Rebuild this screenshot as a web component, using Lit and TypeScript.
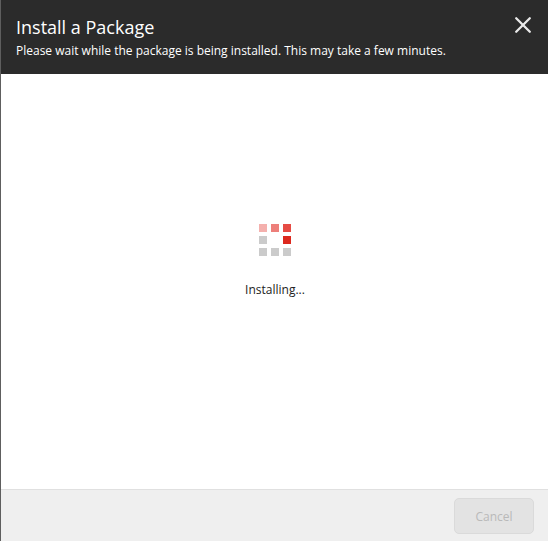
import { LitElement, html, css } from "lit";
import { customElement } from "lit/decorators.js";

@customElement("busy-squares")
class BusySquares extends LitElement {
  static styles = css`
    :host {
      display: grid;
      grid-template-columns: repeat(3, 8px);
      grid-auto-rows: 8px;
      gap: 4px;
    }
    .cell { background: #cbcbcb; }
    .faint { background: #f4b0ad; }
    .medium { background: #ed7f7a; }
    .strong { background: #e64b44; }
    .full { background: #dc291e; }
    .empty { background: none; }
  `;
  render() {
    const cells = ["faint", "medium", "strong", "", "empty", "full", "", "", ""];
    return cells.map((tone) => html`<div class="cell ${tone}"></div>`);
  }
}

@customElement("app-root")
class AppRoot extends LitElement {
  static styles = css`
    :host {
      display: flex;
      flex-direction: column;
      box-sizing: border-box;
      height: 100vh;
      border-left: 1px solid #5e5e5e;
      background: #fff;
      color: #222;
      font: 12px/18px "Open Sans", "Noto Sans", sans-serif;
      overflow: hidden;
    }
    header {
      display: flex;
      justify-content: space-between;
      box-sizing: border-box;
      height: 74px;
      padding: 15px 16px 0 15px;
      background: #2b2b2b;
      color: #fff;
    }
    h1 {
      margin: 0;
      font-size: 18px;
      line-height: 25px;
      font-weight: 400;
    }
    p { margin: 2px 0 0; white-space: nowrap; }
    .close {
      width: 18px;
      height: 18px;
      margin-top: 1px;
      padding: 0;
      border: 0;
      background: none;
    }
    svg { display: block; }
    main {
      flex: 1;
      display: flex;
      flex-direction: column;
      align-items: center;
      padding-top: 150px;
    }
    .status { margin-top: 25px; padding-left: 1px; }
    footer {
      display: flex;
      justify-content: flex-end;
      box-sizing: border-box;
      height: 52px;
      padding: 8px 14px 0 0;
      border-top: 1px solid #e0e0e0;
      background: #efefef;
    }
    .cancel {
      box-sizing: border-box;
      width: 80px;
      height: 36px;
      padding: 2px 0 0;
      border: 1px solid #dadada;
      border-radius: 5px;
      background: #e3e3e3;
      color: #b9b9b9;
      font: inherit;
    }
  `;
  render() {
    return html`
      <header>
        <div>
          <h1>Install a Package</h1>
          <p>Please wait while the package is being installed. This may take a few minutes.</p>
        </div>
        <button class="close" aria-label="Close">
          <svg width="18" height="18" viewBox="0 0 18 18">
            <path d="M2.2 2.2L15.8 15.8M15.8 2.2L2.2 15.8" fill="none" stroke="#e9e9e9" stroke-width="2.3" stroke-linecap="round" />
          </svg>
        </button>
      </header>
      <main>
        <busy-squares></busy-squares>
        <p class="status">Installing...</p>
      </main>
      <footer><button class="cancel" disabled>Cancel</button></footer>
    `;
  }
}
